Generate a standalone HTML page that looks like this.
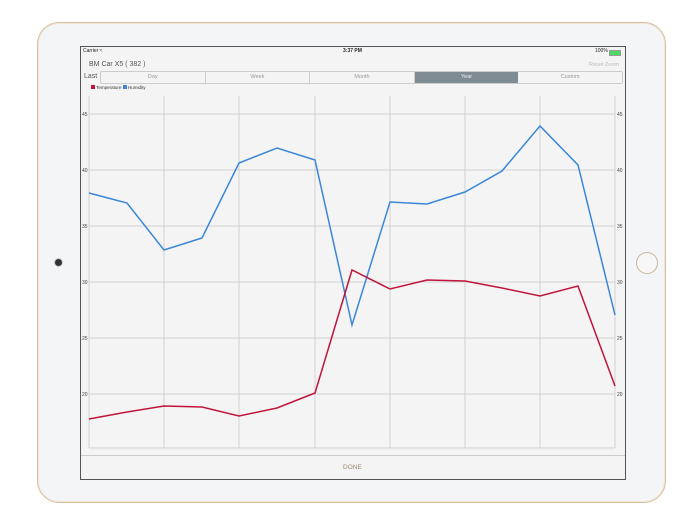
<!DOCTYPE html>
<html><head><meta charset="utf-8"><style>
html,body{margin:0;padding:0;background:#fff;width:700px;height:525px;overflow:hidden;font-family:"Liberation Sans",sans-serif}
.ipad{position:absolute;left:37px;top:22px;width:627px;height:479px;border:1.5px solid #d9bfa0;border-radius:22px;background:#f4f5f6;box-shadow:inset 0 0 0 1px #f1e6d8}
.screen{position:absolute;left:80px;top:46px;width:544px;height:432px;border:1px solid #555;background:#f4f4f5}
.t{position:absolute;white-space:nowrap}
</style></head><body>
<div class="ipad"></div>
<div style="position:absolute;left:55px;top:259px;width:7px;height:7px;border-radius:50%;background:#333;box-shadow:0 0 0 1px #ccc"></div>
<div style="position:absolute;left:636px;top:252px;width:20px;height:20px;border-radius:50%;border:1px solid #c9b49a;background:#f7f7f7"></div>
<div class="screen">
<div class="t" style="left:2px;top:1px;font-size:5px;color:#222">Carrier ≈</div>
<div class="t" style="left:262px;top:1px;font-size:5px;color:#222;font-weight:bold">3:37 PM</div>
<div class="t" style="left:514px;top:1px;font-size:5px;color:#222">100%</div>
<div style="position:absolute;left:528px;top:3px;width:10px;height:4px;background:#4cd964;border:1px solid #999"></div>
<div class="t" style="left:8px;top:14px;font-size:7px;color:#555">BM Car X5 ( 382 )</div>
<div class="t" style="left:508px;top:15px;font-size:5.5px;color:#bbb">Reset Zoom</div>
<div class="t" style="left:3px;top:26px;font-size:7px;color:#555">Last</div>
<div style="position:absolute;left:19px;top:24px;width:521px;height:11px;border:1px solid #ccc;border-radius:2px;display:flex;font-size:5.5px;color:#999">
<div style="flex:1;text-align:center;line-height:11px;border-right:1px solid #ccc">Day</div>
<div style="flex:1;text-align:center;line-height:11px;border-right:1px solid #ccc">Week</div>
<div style="flex:1;text-align:center;line-height:11px;border-right:1px solid #ccc">Month</div>
<div style="flex:1;text-align:center;line-height:11px;background:#7f8c94;color:#eee">Year</div>
<div style="flex:1;text-align:center;line-height:11px">Custom</div>
</div>
<div class="t" style="left:10px;top:38px;font-size:4.5px;color:#333"><span style="display:inline-block;width:4px;height:4px;background:#c0143c"></span> Temperature <span style="display:inline-block;width:4px;height:4px;background:#3a87d8"></span> Humidity</div>
<div style="position:absolute;left:0;top:408px;width:544px;height:1px;background:#ccc"></div>
<div class="t" style="left:262px;top:417px;font-size:6.5px;color:#9a8c6a">DONE</div>
</div>
<svg width="700" height="525" style="position:absolute;left:0;top:0" font-family="Liberation Sans" font-size="5" fill="#444">
<g stroke="#d2d2d2" stroke-width="1">
<line x1="89" y1="96" x2="89" y2="448"/><line x1="164" y1="96" x2="164" y2="448"/><line x1="239" y1="96" x2="239" y2="448"/><line x1="315" y1="96" x2="315" y2="448"/><line x1="390" y1="96" x2="390" y2="448"/><line x1="465" y1="96" x2="465" y2="448"/><line x1="540" y1="96" x2="540" y2="448"/><line x1="615" y1="96" x2="615" y2="448"/>
<line x1="89" y1="448" x2="615" y2="448"/>
<line x1="89" y1="114" x2="615" y2="114"/><line x1="89" y1="170" x2="615" y2="170"/><line x1="89" y1="226" x2="615" y2="226"/><line x1="89" y1="282" x2="615" y2="282"/><line x1="89" y1="338" x2="615" y2="338"/><line x1="89" y1="394" x2="615" y2="394"/>
</g>
<text x="82" y="116">45</text><text x="82" y="172">40</text><text x="82" y="228">35</text><text x="82" y="284">30</text><text x="82" y="340">25</text><text x="82" y="396">20</text>
<text x="617" y="116">45</text><text x="617" y="172">40</text><text x="617" y="228">35</text><text x="617" y="284">30</text><text x="617" y="340">25</text><text x="617" y="396">20</text>
<polyline fill="none" stroke="#3a87d8" stroke-width="1.5" points="89,193 127,203 164,250 202,238 239,163 277,148 315,160 352,325 390,202 427,204 465,192 502,171 540,126 578,165 615,315"/>
<polyline fill="none" stroke="#c0143c" stroke-width="1.5" points="89,419 127,412 164,406 202,407 239,416 277,408 315,393 352,270 390,289 427,280 465,281 502,288 540,296 578,286 615,386"/>
</svg>
</body></html>
